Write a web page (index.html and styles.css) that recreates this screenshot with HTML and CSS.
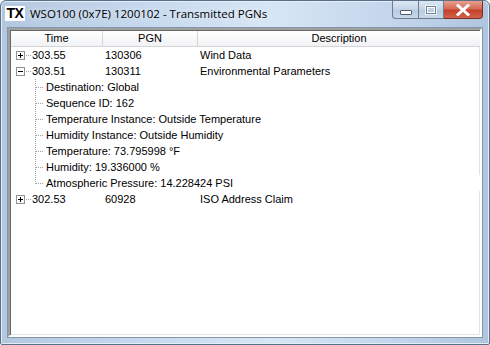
FILE: index.html
```html
<!DOCTYPE html>
<html>
<head>
<meta charset="utf-8">
<link rel="stylesheet" href="styles.css">
</head>
<body>
<div class="window">
  <div class="titlebar">
    <div class="appicon">TX</div>
    <div class="title">WSO100 (0x7E) 1200102 - Transmitted PGNs</div>
    <div class="controls">
      <div class="btn min"><span class="minbar"></span></div>
      <div class="btn max"><span class="maxbox"></span></div>
      <div class="btn close">
        <svg width="14" height="12" viewBox="0 0 14 12"><path d="M2 1.5 L12 10.5 M12 1.5 L2 10.5" stroke="#fff" stroke-width="3" stroke-linecap="square"/></svg>
      </div>
    </div>
  </div>
  <div class="client">
    <div class="list">
      <div class="header">
        <div class="hcell c1">Time</div>
        <div class="hcell c2">PGN</div>
        <div class="hcell c3">Description</div>
      </div>
      <div class="rows">
        <div class="row">
          <div class="c1 node"><span class="box plus"></span><span class="hdot"></span><span>303.55</span></div>
          <div class="c2 cell">130306</div>
          <div class="c3 cell">Wind Data</div>
        </div>
        <div class="row">
          <div class="c1 node"><span class="box minus"></span><span class="hdot"></span><span>303.51</span></div>
          <div class="c2 cell">130311</div>
          <div class="c3 cell">Environmental Parameters</div>
        </div>
        <div class="children">
          <div class="child">Destination: Global</div>
          <div class="child">Sequence ID: 162</div>
          <div class="child">Temperature Instance: Outside Temperature</div>
          <div class="child">Humidity Instance: Outside Humidity</div>
          <div class="child">Temperature: 73.795998 °F</div>
          <div class="child">Humidity: 19.336000 %</div>
          <div class="child last">Atmospheric Pressure: 14.228424 PSI</div>
        </div>
        <div class="row">
          <div class="c1 node"><span class="box plus"></span><span class="hdot"></span><span>302.53</span></div>
          <div class="c2 cell">60928</div>
          <div class="c3 cell">ISO Address Claim</div>
        </div>
      </div>
    </div>
  </div>
</div>
</body>
</html>
```

FILE: styles.css
```css
html, body {
  margin: 0;
  padding: 0;
  width: 490px;
  height: 345px;
  overflow: hidden;
  background: #fff;
}

.window {
  box-sizing: border-box;
  width: 490px;
  height: 345px;
  border: 1px solid #5b6f86;
  border-radius: 6px 6px 2px 2px;
  background: linear-gradient(90deg, #b3c8df 0%, #c6d9ee 30%, #d7e6f5 55%, #c3d6eb 80%, #afc5de 100%);
  display: flex;
  flex-direction: column;
  box-shadow: inset 0 0 0 1px #e3edf7;
}

.titlebar {
  height: 26px;
  display: flex;
  align-items: flex-start;
  padding-left: 4px;
}

.appicon {
  margin-top: 5px;
  width: 20px;
  height: 15px;
  background: #fff;
  font-family: "Liberation Sans", Arial, sans-serif;
  font-weight: bold;
  font-size: 14px;
  line-height: 15px;
  color: #000;
  text-align: center;
  letter-spacing: -0.5px;
}

.title {
  margin-top: 5px;
  margin-left: 5px;
  font-family: "Open Sans", "Noto Sans", sans-serif;
  font-size: 11.5px;
  line-height: 16px;
  color: #000;
  flex: 1;
  text-shadow: 0 0 6px rgba(255,255,255,0.9);
}

.controls {
  display: flex;
  margin-right: 6px;
}

.btn {
  height: 18px;
  box-sizing: border-box;
  border: 1px solid #6a7d93;
  border-top: none;
  display: flex;
  align-items: center;
  justify-content: center;
}

.min {
  width: 26px;
  border-radius: 0 0 0 4px;
  border-right: none;
  background: linear-gradient(#dce7f3, #c5d5e6 50%, #b6c9de 51%, #c9d9ea);
}

.max {
  width: 26px;
  background: linear-gradient(#dce7f3, #c5d5e6 50%, #b6c9de 51%, #c9d9ea);
}

.close {
  width: 39px;
  border-left: none;
  border-color: #7a2f27;
  border-radius: 0 0 4px 0;
  background: linear-gradient(#e8a090, #d66a56 45%, #c6402a 55%, #d0634a);
}

.minbar {
  width: 10px;
  height: 3px;
  background: #fff;
  border: 1px solid #4f5f71;
  border-radius: 1px;
  margin-top: 5px;
}

.maxbox {
  width: 8px;
  height: 6px;
  border: 1px solid #6f8196;
  box-shadow: inset 0 0 0 1px #fff, 0 0 0 1px #eef3f8;
}

.client {
  flex: 1;
  margin: 0 6px 6px 6px;
  border: 1px solid #8396ac;
  background: #f0f0f0;
  display: flex;
}

.list {
  flex: 1;
  border-style: solid;
  border-width: 2px;
  border-color: #a0a0a0 #ffffff #ffffff #a0a0a0;
  box-shadow: inset 1px 1px 0 #696969, inset -1px -1px 0 #e3e3e3;
  background: #fff;
  display: flex;
  flex-direction: column;
  font-family: "Liberation Sans", Arial, sans-serif;
  font-size: 11px;
  color: #000;
}

.header {
  display: flex;
  height: 15px;
  margin-left: 1px;
  margin-top: 1px;
  background: linear-gradient(#ffffff, #f1f2f4);
  border-bottom: 1px solid #d5d5d5;
}

.hcell {
  box-sizing: border-box;
  text-align: center;
  line-height: 15px;
  border-right: 1px solid #d5d5d5;
  font-size: 11px;
}

.c1 { width: 93px; flex: none; }
.c2 { width: 95px; flex: none; }
.c3 { flex: 1; }

.hcell.c1 { width: 92px; }
.hcell.c3 { border-right: none; }

.rows {
  padding-left: 1px;
}

.row {
  display: flex;
  height: 16px;
  line-height: 16px;
  font-size: 11px;
}

.cell { padding-left: 1px; box-sizing: border-box; }

.node {
  display: flex;
  align-items: center;
  padding-left: 5px;
  box-sizing: border-box;
}

.box {
  width: 9px;
  height: 9px;
  box-sizing: border-box;
  border: 1px solid #919191;
  background: #fff;
  position: relative;
  flex: none;
}

.box::before {
  content: "";
  position: absolute;
  left: 1px;
  top: 3px;
  width: 5px;
  height: 1px;
  background: #000;
}

.plus::after {
  content: "";
  position: absolute;
  left: 3px;
  top: 1px;
  width: 1px;
  height: 5px;
  background: #000;
}

.hdot {
  width: 5px;
  height: 1px;
  margin: 0 1px 0 1px;
  background-image: linear-gradient(90deg, #a0a0a0 50%, transparent 50%);
  background-size: 2px 1px;
  flex: none;
}

.children {
  margin-left: 24px;
  background-image: linear-gradient(#a0a0a0 50%, transparent 50%);
  background-size: 1px 2px;
  background-repeat: repeat-y;
  background-position: 0 0;
}

.child {
  height: 16px;
  line-height: 16px;
  font-size: 11px;
  padding-left: 11px;
  position: relative;
}

.child::before {
  content: "";
  position: absolute;
  left: 1px;
  top: 8px;
  width: 8px;
  height: 1px;
  background-image: linear-gradient(90deg, #a0a0a0 50%, transparent 50%);
  background-size: 2px 1px;
}

.child.last {
  background: #fff;
}

.child.last::after {
  content: "";
  position: absolute;
  left: 0;
  top: 0;
  width: 1px;
  height: 9px;
  background-image: linear-gradient(#a0a0a0 50%, transparent 50%);
  background-size: 1px 2px;
}
```
